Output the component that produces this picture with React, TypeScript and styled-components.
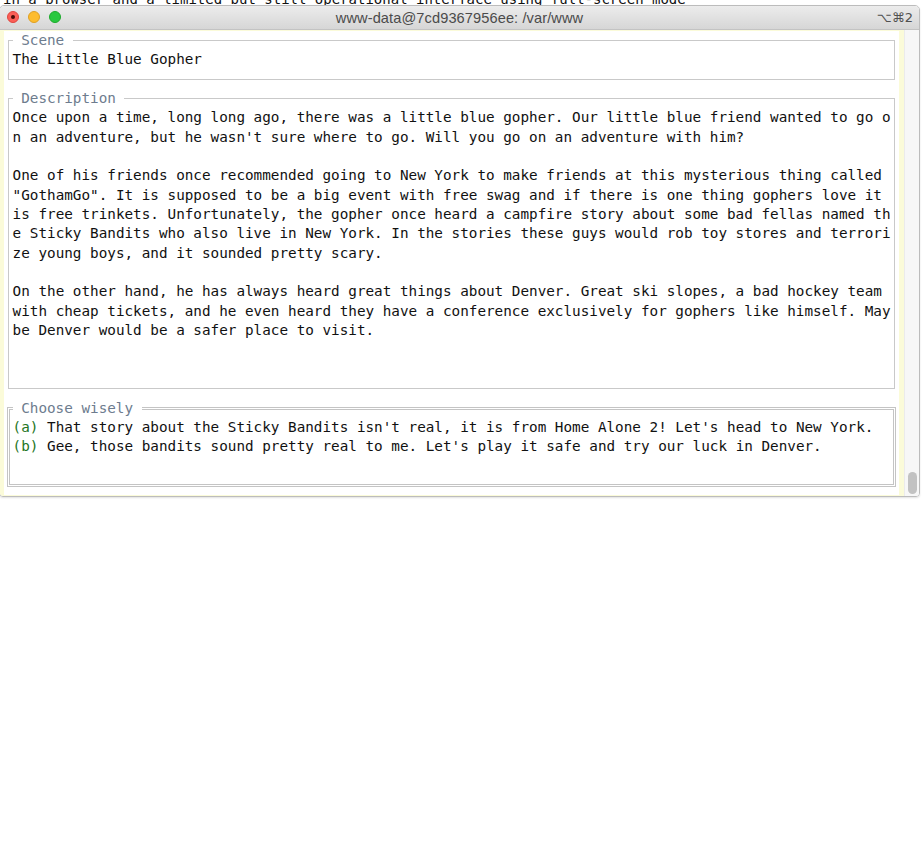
import React from "react";
import styled, { createGlobalStyle } from "styled-components";

const ROW = 19.35;
const COL = 8.606;
const MONO = `"DejaVu Sans Mono", "Liberation Mono", monospace`;
const SANS = `"Liberation Sans", Arial, "DejaVu Sans", sans-serif`;

const GlobalStyle = createGlobalStyle`
  html, body { margin: 0; padding: 0; background: #ffffff; }
  body { width: 922px; height: 841px; overflow: hidden; }
`;

const Page = styled.div`
  display: flex;
  flex-direction: column;
  width: 922px;
`;

const Behind = styled.div`
  height: 5px;
  overflow: hidden;
  padding-left: 3px;
  font-family: ${MONO};
  font-size: 14px;
  line-height: 14px;
  color: #111;
  white-space: pre;
`;

const BehindLine = styled.div`
  margin-top: -8px;
`;

const Window = styled.div`
  margin-left: -1px;
  width: 921px;
  box-sizing: border-box;
  border: 1px solid #bcbcbc;
  border-radius: 5px 5px 4px 4px;
  overflow: hidden;
  display: flex;
  flex-direction: column;
  box-shadow: 0 1px 2px rgba(0, 0, 0, 0.12);
`;

const TitleBar = styled.div`
  height: 23px;
  border-bottom: 1px solid #c3c3c3;
  background: linear-gradient(#ececec, #d6d6d6);
  display: grid;
  grid-template-columns: 1fr auto 1fr;
  align-items: center;
`;

const Lights = styled.div`
  display: flex;
  gap: 8.6px;
  padding-left: 6.5px;
  margin-top: -1px;
`;

const Light = styled.span<{ $bg: string; $edge: string }>`
  width: 12.5px;
  height: 12.5px;
  box-sizing: border-box;
  border-radius: 50%;
  background: ${(p) => p.$bg};
  border: 0.5px solid ${(p) => p.$edge};
  display: flex;
  align-items: center;
  justify-content: center;
`;

const Dot = styled.span`
  width: 4px;
  height: 4px;
  border-radius: 50%;
  background: #4a0c08;
`;

const Title = styled.div`
  font-family: ${SANS};
  font-size: 14.6px;
  color: #4b4b4b;
  letter-spacing: 0.1px;
`;

const Shortcut = styled.div`
  justify-self: end;
  padding-right: 6px;
  font-family: "DejaVu Sans", ${SANS};
  font-size: 13px;
  color: #505050;
`;

const Body = styled.div`
  display: flex;
  height: ${24 * ROW + 2}px;
`;

const TermArea = styled.div`
  flex: 1;
  background: #fbfbd9;
  padding: 1px 5px 1px 4px;
  display: flex;
  flex-direction: column;
`;

const Screen = styled.div`
  width: ${104 * COL}px;
  background: #ffffff;
  display: flex;
  flex-direction: column;
  font-family: ${MONO};
  font-size: 14.3px;
  color: #111;
`;

const Scrollbar = styled.div`
  width: 15px;
  box-sizing: border-box;
  background: #f7f7f7;
  border-left: 1px solid #ebebeb;
  display: flex;
  flex-direction: column;
  justify-content: flex-end;
  align-items: center;
  padding-bottom: 2px;
`;

const Thumb = styled.div`
  width: 9px;
  height: 22px;
  border-radius: 5px;
  background: #c2c2c2;
`;

const Panel = styled.section<{ $rows: number; $double?: boolean }>`
  height: ${(p) => p.$rows * ROW}px;
  box-sizing: border-box;
  padding: ${(p) => (p.$double ? `${ROW / 2 - 1.5}px ${COL / 2 - 1.5}px` : `${ROW / 2 - 0.5}px ${COL / 2 - 0.5}px`)};
  display: flex;
`;

const Frame = styled.div<{ $double?: boolean }>`
  flex: 1;
  position: relative;
  border: ${(p) => (p.$double ? "3px double #c4c4c4" : "1px solid #c9c9c9")};
  padding: ${(p) => (p.$double ? `${ROW / 2 - 1.5}px ${COL / 2 - 1.5}px` : `${ROW / 2 - 0.5}px ${COL / 2 - 0.5}px`)};
  display: flex;
  flex-direction: column;
`;

const Legend = styled.div<{ $double?: boolean }>`
  position: absolute;
  top: ${(p) => -(ROW / 2 + (p.$double ? 1.5 : 0.5))}px;
  left: ${(p) => COL / 2 - (p.$double ? 1.5 : 0.5)}px;
  height: ${ROW}px;
  line-height: ${ROW}px;
  padding: 0 ${COL}px;
  background: #ffffff;
  color: #6d7c8e;
  white-space: pre;
`;

const Line = styled.div`
  height: ${ROW}px;
  line-height: ${ROW}px;
  white-space: pre;
`;

const Key = styled.span`
  color: #247524;
`;

const description = [
  "Once upon a time, long long ago, there was a little blue gopher. Our little blue friend wanted to go o",
  "n an adventure, but he wasn't sure where to go. Will you go on an adventure with him?",
  "",
  "One of his friends once recommended going to New York to make friends at this mysterious thing called",
  "\"GothamGo\". It is supposed to be a big event with free swag and if there is one thing gophers love it",
  "is free trinkets. Unfortunately, the gopher once heard a campfire story about some bad fellas named th",
  "e Sticky Bandits who also live in New York. In the stories these guys would rob toy stores and terrori",
  "ze young boys, and it sounded pretty scary.",
  "",
  "On the other hand, he has always heard great things about Denver. Great ski slopes, a bad hockey team",
  "with cheap tickets, and he even heard they have a conference exclusively for gophers like himself. May",
  "be Denver would be a safer place to visit.",
];

const options = [
  { key: "(a)", text: " That story about the Sticky Bandits isn't real, it is from Home Alone 2! Let's head to New York." },
  { key: "(b)", text: " Gee, those bandits sound pretty real to me. Let's play it safe and try our luck in Denver." },
];

export default function App() {
  return (
    <Page>
      <GlobalStyle />
      <Behind>
        <BehindLine>in a browser and a limited but still operational interface using full-screen mode</BehindLine>
      </Behind>
      <Window>
        <TitleBar>
          <Lights>
            <Light $bg="#fc5f57" $edge="#df4640">
              <Dot />
            </Light>
            <Light $bg="#fdbc2e" $edge="#dfa023" />
            <Light $bg="#29c840" $edge="#1daa2c" />
          </Lights>
          <Title>www-data@7cd9367956ee: /var/www</Title>
          <Shortcut>⌥⌘2</Shortcut>
        </TitleBar>
        <Body>
          <TermArea>
            <Screen>
              <Panel $rows={3}>
                <Frame>
                  <Legend>Scene</Legend>
                  <Line>The Little Blue Gopher</Line>
                </Frame>
              </Panel>
              <Panel $rows={16}>
                <Frame>
                  <Legend>Description</Legend>
                  {description.map((l, i) => (
                    <Line key={i}>{l}</Line>
                  ))}
                </Frame>
              </Panel>
              <Panel $rows={5} $double>
                <Frame $double>
                  <Legend $double>Choose wisely</Legend>
                  {options.map((o) => (
                    <Line key={o.key}>
                      <Key>{o.key}</Key>
                      {o.text}
                    </Line>
                  ))}
                </Frame>
              </Panel>
            </Screen>
          </TermArea>
          <Scrollbar>
            <Thumb />
          </Scrollbar>
        </Body>
      </Window>
    </Page>
  );
}
